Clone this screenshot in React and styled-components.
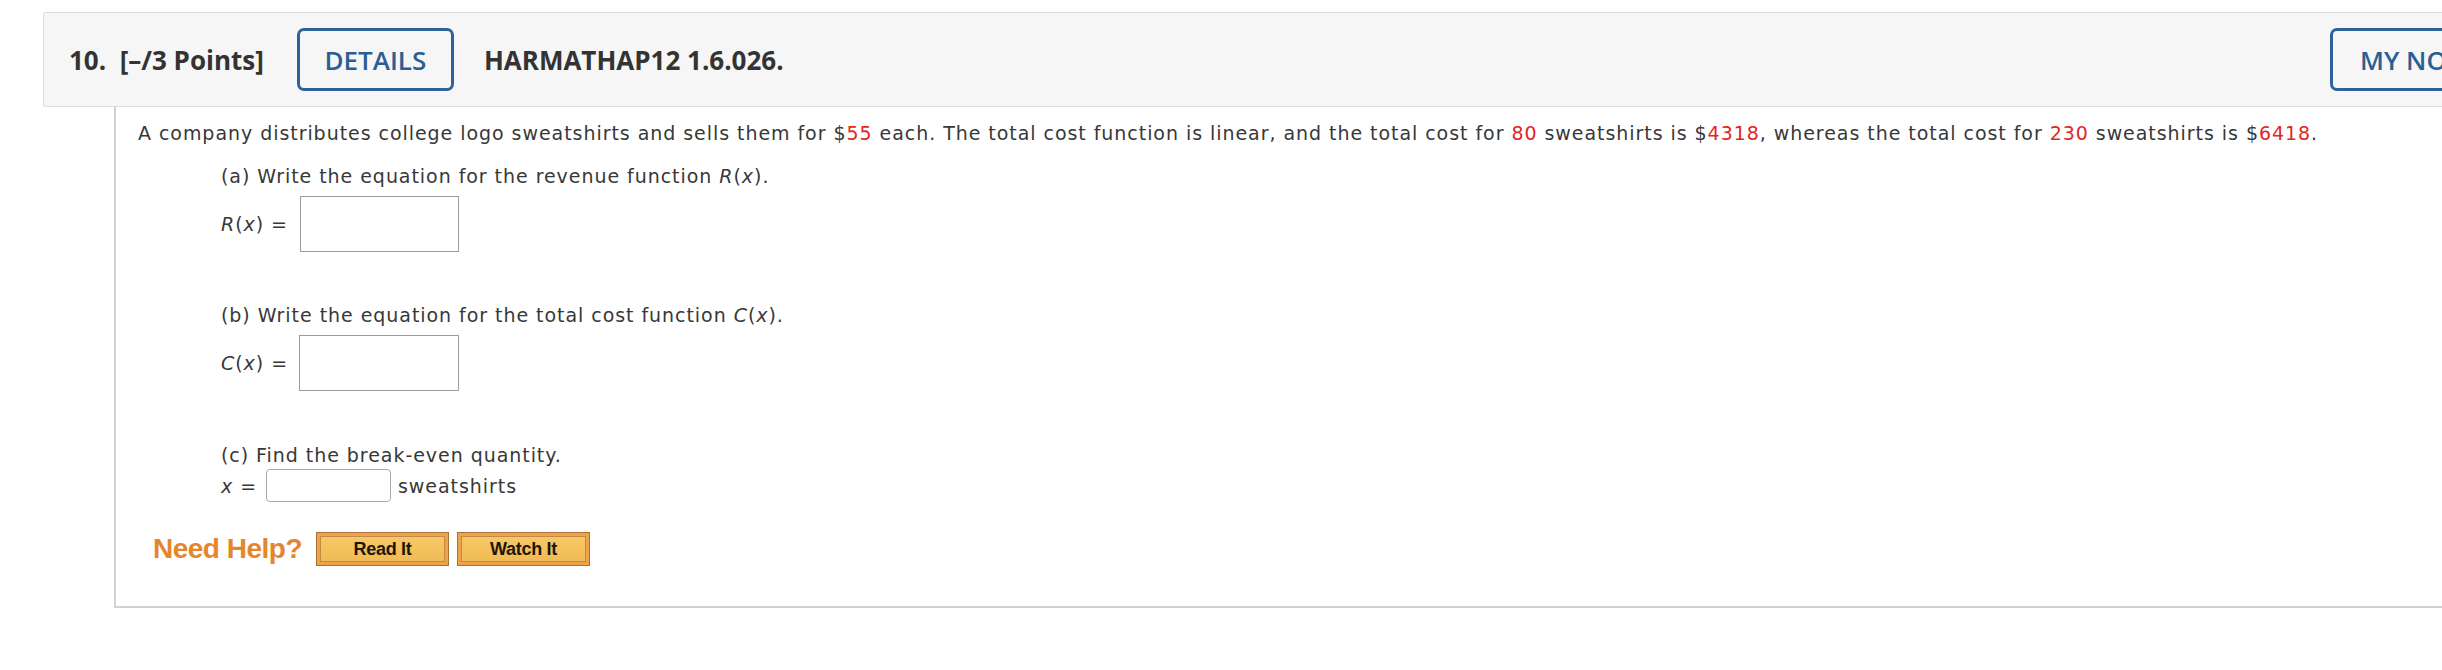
import React from 'react';
import styled, { createGlobalStyle } from 'styled-components';

const GlobalStyle = createGlobalStyle`
  html, body {
    margin: 0;
    padding: 0;
    background: #ffffff;
  }
  body {
    overflow: hidden;
  }
`;

const Page = styled.div`
  width: 2442px;
  height: 670px;
  overflow: hidden;
  padding-top: 12px;
  box-sizing: border-box;
`;

const Header = styled.div`
  margin-left: 43px;
  width: 2508px;
  height: 95px;
  box-sizing: border-box;
  background: #f6f6f6;
  border: 1px solid #dddddd;
  border-radius: 2px;
  display: flex;
  align-items: center;
  padding: 0 20px 0 25px;
  font-family: "Open Sans", "Liberation Sans", sans-serif;
  font-weight: 700;
  font-size: 26px;
  color: #333333;
  white-space: nowrap;
`;

const Points = styled.span`
  white-space: pre;
  flex-shrink: 0;
`;

const OutlineButton = styled.button`
  flex-shrink: 0;
  box-sizing: border-box;
  height: 63px;
  width: ${p => p.$width}px;
  margin-left: ${p => p.$gap}px;
  background: transparent;
  border: 3px solid #2d6399;
  border-radius: 7px;
  color: #2b5f93;
  font-family: "Open Sans", "Liberation Sans", sans-serif;
  font-weight: 600;
  font-size: 26px;
  white-space: nowrap;
  text-align: ${p => (p.$left ? 'left' : 'center')};
  padding: ${p => (p.$left ? '0 0 0 27px' : '0')};
`;

const Code = styled.span`
  flex-shrink: 0;
  margin-left: 30px;
`;

const Spacer = styled.div`
  flex: 1;
`;

const Body = styled.div`
  margin-left: 114px;
  width: 2400px;
  height: 501px;
  box-sizing: border-box;
  border: 2px solid #d2d2d2;
  border-top: none;
  padding: 14px 0 0 22px;
  font-family: "DejaVu Sans", Verdana, sans-serif;
  font-size: 19px;
  letter-spacing: 0.95px;
  color: #383838;
`;

const Intro = styled.p`
  margin: 0;
  line-height: 24px;
  white-space: nowrap;
`;

const Red = styled.span`
  color: #e2261d;
`;

const Part = styled.div`
  padding-left: ${p => p.$indent}px;
  margin-top: ${p => p.$top}px;
`;

const Prompt = styled.div`
  line-height: 24px;
`;

const AnswerRow = styled.div`
  display: flex;
  align-items: center;
  margin-top: ${p => p.$top}px;
`;

const Label = styled.span`
  width: ${p => p.$width}px;
  white-space: nowrap;
`;

const AnswerBox = styled.div`
  box-sizing: border-box;
  width: ${p => p.$w}px;
  height: ${p => p.$h}px;
  border: 1px solid ${p => (p.$round ? '#a8a8a8' : '#9c9c9c')};
  border-radius: ${p => (p.$round ? '4px' : '0')};
  background: #ffffff;
`;

const Unit = styled.span`
  margin-left: 7px;
`;

const HelpRow = styled.div`
  display: flex;
  align-items: center;
  margin-top: 30px;
  padding-left: 15px;
`;

const HelpText = styled.span`
  font-family: "Liberation Sans", Arial, sans-serif;
  font-weight: 700;
  font-size: 28px;
  color: #e5852c;
  margin-right: 14px;
  letter-spacing: -0.5px;
`;

const HelpButton = styled.div`
  box-sizing: border-box;
  width: 133px;
  height: 34px;
  margin-right: 8px;
  border: 1px solid #a8733a;
  background: #eea24a;
  padding: 3px;
`;

const HelpInner = styled.div`
  box-sizing: border-box;
  height: 100%;
  border: 1px solid #c48a45;
  background: linear-gradient(#f6c866, #f1bb55);
  display: flex;
  align-items: center;
  justify-content: center;
  font-family: "Liberation Sans", Arial, sans-serif;
  font-weight: 700;
  font-size: 18px;
  color: #1e1608;
  letter-spacing: -0.3px;
`;

const I = styled.i`
  font-style: italic;
`;

export default function App() {
  return (
    <Page>
      <GlobalStyle />
      <Header>
        <Points>10.  [–/3 Points]</Points>
        <OutlineButton $width={157} $gap={33}>DETAILS</OutlineButton>
        <Code>HARMATHAP12 1.6.026.</Code>
        <Spacer />
        <OutlineButton $width={200} $gap={0} $left>MY NOTES</OutlineButton>
      </Header>
      <Body>
        <Intro>
          A company distributes college logo sweatshirts and sells them for $<Red>55</Red> each. The total cost
          function is linear, and the total cost for <Red>80</Red> sweatshirts is $<Red>4318</Red>, whereas the
          total cost for <Red>230</Red> sweatshirts is $<Red>6418</Red>.
        </Intro>

        <Part $indent={83} $top={19}>
          <Prompt>
            (a) Write the equation for the revenue function <I>R</I>(<I>x</I>).
          </Prompt>
          <AnswerRow $top={8}>
            <Label $width={79}>
              <I>R</I>(<I>x</I>) =
            </Label>
            <AnswerBox $w={159} $h={56} />
          </AnswerRow>
        </Part>

        <Part $indent={83} $top={51}>
          <Prompt>
            (b) Write the equation for the total cost function <I>C</I>(<I>x</I>).
          </Prompt>
          <AnswerRow $top={8}>
            <Label $width={78}>
              <I>C</I>(<I>x</I>) =
            </Label>
            <AnswerBox $w={160} $h={56} />
          </AnswerRow>
        </Part>

        <Part $indent={83} $top={52}>
          <Prompt>(c) Find the break-even quantity.</Prompt>
          <AnswerRow $top={2}>
            <Label $width={45}>
              <I>x</I> =
            </Label>
            <AnswerBox $w={125} $h={33} $round />
            <Unit>sweatshirts</Unit>
          </AnswerRow>
        </Part>

        <HelpRow>
          <HelpText>Need Help?</HelpText>
          <HelpButton>
            <HelpInner>Read It</HelpInner>
          </HelpButton>
          <HelpButton>
            <HelpInner>Watch It</HelpInner>
          </HelpButton>
        </HelpRow>
      </Body>
    </Page>
  );
}
